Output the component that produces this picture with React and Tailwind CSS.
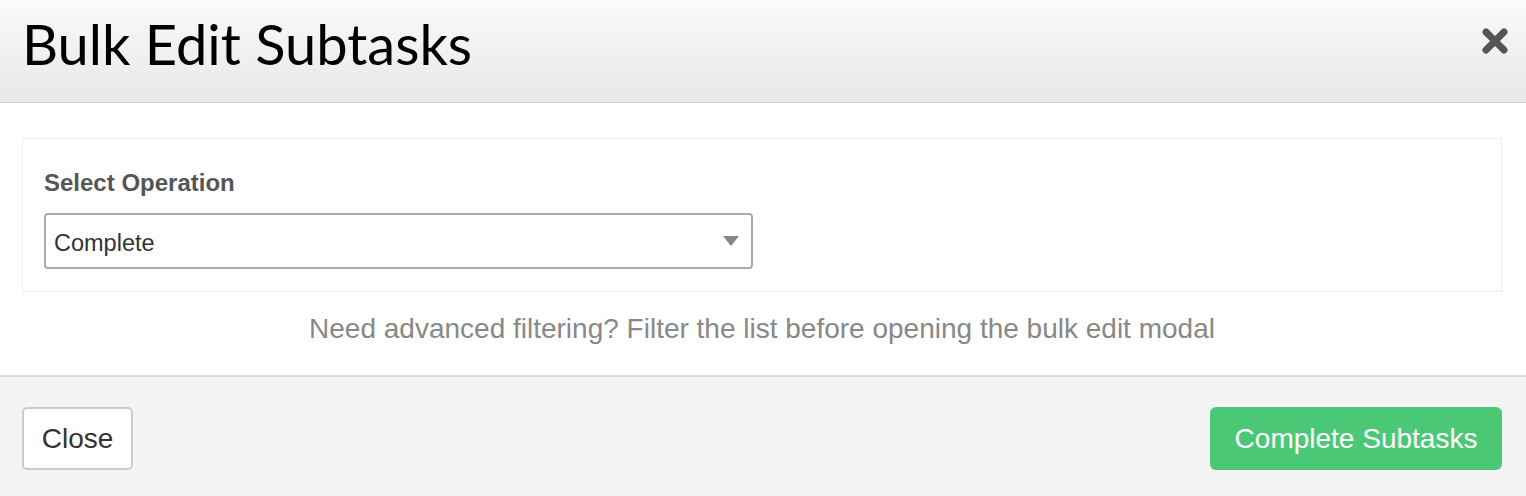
export default function App() {
  return (
    <div className="w-[1526px] h-[496px] bg-white flex flex-col" style={{ fontFamily: '"Liberation Sans", Arial, sans-serif' }}>
      <div className="h-[103px] flex items-start justify-between border-b border-[#cfcfcf] bg-gradient-to-b from-[#fafafa] to-[#e8e8e8]">
        <h1 className="ml-[22px] mt-[11px] text-[56px] leading-[66px] text-black" style={{ fontFamily: 'Lato, sans-serif' }}>
          Bulk Edit Subtasks
        </h1>
        <button className="mr-[17px] mt-[27px] w-[28px] h-[28px] flex items-center justify-center">
          <svg width="28" height="28" viewBox="0 0 28 28">
            <path d="M5 5 L23 23 M23 5 L5 23" stroke="#555" strokeWidth="7" strokeLinecap="round" />
          </svg>
        </button>
      </div>

      <div className="flex-1 pl-[22px] pr-[24px] pt-[35px]">
        <div className="border border-[#ededed] h-[154px] px-[21px] pt-[30px]">
          <label className="block text-[24px] leading-[28px] font-bold text-[#555]">Select Operation</label>
          <div className="mt-[16px] w-[709px] h-[56px] border-2 border-[#aaa] rounded-[4px] flex items-center justify-between pl-[8px] pr-[12px]">
            <span className="text-[23.5px] text-[#333] mt-[6px]">Complete</span>
            <svg width="16" height="10" viewBox="0 0 16 10">
              <path d="M0 0 L16 0 L8 10 Z" fill="#888" />
            </svg>
          </div>
        </div>
        <p className="mt-[22px] text-center text-[28px] leading-[30px] text-[#888]">
          Need advanced filtering? Filter the list before opening the bulk edit modal
        </p>
      </div>

      <div className="h-[121px] border-t-2 border-[#dcdcdc] bg-[#f4f4f4] flex items-start justify-between pl-[22px] pr-[24px] pt-[30px]">
        <button className="w-[111px] h-[63px] bg-white border-2 border-[#ccc] rounded-[5px] text-[28px] text-[#333]">
          Close
        </button>
        <button className="w-[292px] h-[63px] bg-[#4bc876] rounded-[6px] text-[28px] text-white">
          Complete Subtasks
        </button>
      </div>
    </div>
  )
}
